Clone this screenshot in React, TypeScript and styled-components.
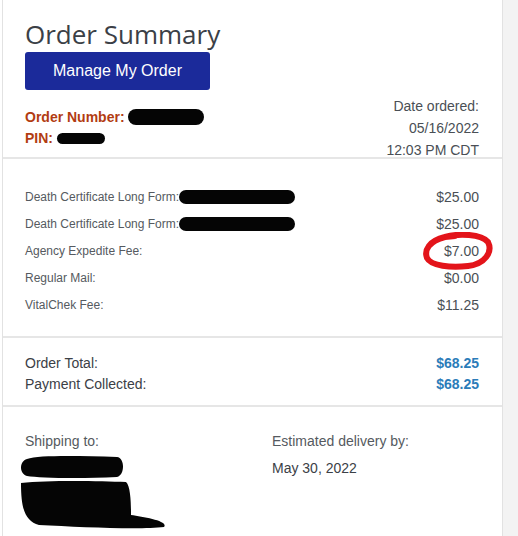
import React from "react";
import styled, { createGlobalStyle } from "styled-components";

const Global = createGlobalStyle`
  html, body { margin: 0; padding: 0; background: #ffffff; }
  body { font-family: "Liberation Sans", Arial, sans-serif; }
`;

const Page = styled.div`
  display: flex;
  width: 518px;
  height: 536px;
  overflow: hidden;
  background: #ffffff;
`;

const Card = styled.div`
  margin-left: 2px;
  width: 499px;
  border-left: 1px solid #e2e2e2;
  border-right: 1px solid #e2e2e2;
  background: #ffffff;
  display: flex;
  flex-direction: column;
`;

const Gutter = styled.div`
  flex: 1;
  background: #f3f3f3;
`;

const Section = styled.section<{ $pt: number; $pb: number; $last?: boolean }>`
  padding: ${(p) => p.$pt}px 23px ${(p) => p.$pb}px 22px;
  border-bottom: ${(p) => (p.$last ? "none" : "2px solid #e6e6e6")};
  position: relative;
`;

const Title = styled.h1`
  margin: 0;
  font-family: "Open Sans", "Noto Sans", sans-serif;
  font-weight: 400;
  font-size: 26px;
  line-height: 32px;
  color: #3b4046;
`;

const ManageButton = styled.button`
  display: block;
  margin-top: 2px;
  width: 185px;
  height: 38px;
  border: none;
  border-radius: 3px;
  background: #1b2a9a;
  color: #ffffff;
  font-family: "Liberation Sans", Arial, sans-serif;
  font-size: 16px;
`;

const HeaderRow = styled.div`
  display: flex;
  justify-content: space-between;
  align-items: flex-end;
  margin-top: 5px;
  margin-bottom: -4px;
`;

const OrderIds = styled.div`
  display: flex;
  flex-direction: column;
  gap: 5px;
  padding-bottom: 15px;
`;

const IdLine = styled.div`
  display: flex;
  align-items: center;
  font-size: 14px;
  font-weight: 700;
  color: #b23c12;
  line-height: 16px;
`;

const Redact = styled.span<{ $w: number; $h: number; $r?: string }>`
  display: inline-block;
  width: ${(p) => p.$w}px;
  height: ${(p) => p.$h}px;
  background: #050505;
  border-radius: ${(p) => p.$r ?? "8px"};
`;

const DateBlock = styled.div`
  text-align: right;
  font-size: 14px;
  line-height: 22px;
  color: #4a4f55;
`;

const ItemList = styled.div`
  display: flex;
  flex-direction: column;
`;

const ItemRow = styled.div`
  display: flex;
  justify-content: space-between;
  align-items: center;
  height: 27px;
`;

const ItemLabel = styled.span`
  display: flex;
  align-items: center;
  font-size: 12px;
  color: #555a60;
`;

const Amount = styled.span`
  position: relative;
  font-size: 14px;
  color: #4a4f55;
`;

const Circle = styled.svg`
  position: absolute;
  left: -21px;
  top: -11px;
  width: 70px;
  height: 38px;
  pointer-events: none;
`;

const TotalRow = styled.div`
  display: flex;
  justify-content: space-between;
  font-size: 14px;
  line-height: 21px;
  color: #3b4046;
`;

const TotalAmount = styled.span`
  font-weight: 700;
  color: #2b7cb9;
`;

const ShipGrid = styled.div`
  display: grid;
  grid-template-columns: 247px 1fr;
`;

const ShipCol = styled.div`
  display: flex;
  flex-direction: column;
`;

const ShipHead = styled.div`
  font-size: 14px;
  line-height: 16px;
  color: #555a60;
`;

const ShipValue = styled.div`
  margin-top: 11px;
  font-size: 14px;
  line-height: 16px;
  color: #3b4046;
`;

const AddressBlot = styled.svg`
  display: block;
  margin: 4px 0 0 -6px;
`;

const items = [
  { label: "Death Certificate Long Form:", amount: "$25.00", redact: true },
  { label: "Death Certificate Long Form:", amount: "$25.00", redact: true },
  { label: "Agency Expedite Fee:", amount: "$7.00", circled: true },
  { label: "Regular Mail:", amount: "$0.00" },
  { label: "VitalChek Fee:", amount: "$11.25" },
];

export default function App() {
  return (
    <>
      <Global />
      <Page>
        <Card>
          <Section $pt={18} $pb={0}>
            <Title>Order Summary</Title>
            <ManageButton>Manage My Order</ManageButton>
            <HeaderRow>
              <OrderIds>
                <IdLine>
                  Order Number:&nbsp;<Redact $w={76} $h={16} $r="8px" />
                </IdLine>
                <IdLine>
                  PIN:&nbsp;<Redact $w={48} $h={11} $r="6px" />
                </IdLine>
              </OrderIds>
              <DateBlock>
                Date ordered:
                <br />
                05/16/2022
                <br />
                12:03 PM CDT
              </DateBlock>
            </HeaderRow>
          </Section>
          <Section $pt={24} $pb={18}>
            <ItemList>
              {items.map((it, i) => (
                <ItemRow key={i}>
                  <ItemLabel>
                    {it.label}
                    {it.redact && <Redact $w={116} $h={14} $r="7px" />}
                  </ItemLabel>
                  <Amount>
                    {it.amount}
                    {it.circled && (
                      <Circle viewBox="0 0 70 38">
                        <path
                          d="M22 5 C36 1 58 2 65 10 C70 20 62 32 45 34 C28 36 8 34 4 26 C1 18 6 9 22 5 L32 4"
                          fill="none"
                          stroke="#e3141a"
                          strokeWidth="6"
                          strokeLinecap="round"
                        />
                      </Circle>
                    )}
                  </Amount>
                </ItemRow>
              ))}
            </ItemList>
          </Section>
          <Section $pt={15} $pb={10}>
            <TotalRow>
              <span>Order Total:</span>
              <TotalAmount>$68.25</TotalAmount>
            </TotalRow>
            <TotalRow>
              <span>Payment Collected:</span>
              <TotalAmount>$68.25</TotalAmount>
            </TotalRow>
          </Section>
          <Section $pt={26} $pb={10} $last>
            <ShipGrid>
              <ShipCol>
                <ShipHead>Shipping to:</ShipHead>
                <AddressBlot width="150" height="78" viewBox="0 0 150 78">
                  <path d="M8 6 C20 2 60 3 98 4 C106 5 106 22 98 24 C60 26 20 25 8 23 C0 21 0 8 8 6 Z" fill="#050505" />
                  <path d="M2 30 C30 27 80 28 107 29 C112 33 112 54 112 62 C125 64 150 68 145 74 C120 77 60 74 20 72 C6 68 2 56 2 30 Z" fill="#050505" />
                </AddressBlot>
              </ShipCol>
              <ShipCol>
                <ShipHead>Estimated delivery by:</ShipHead>
                <ShipValue>May 30, 2022</ShipValue>
              </ShipCol>
            </ShipGrid>
          </Section>
        </Card>
        <Gutter />
      </Page>
    </>
  );
}
